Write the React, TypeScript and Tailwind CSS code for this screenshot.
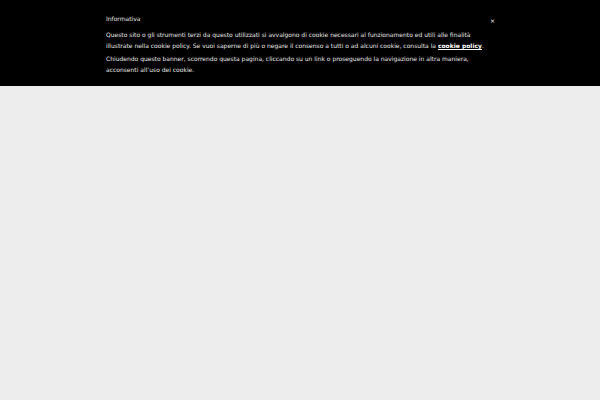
export default function App() {
  return (
    <div className="min-h-[400px] w-full bg-[#ededed]" style={{ fontFamily: '"DejaVu Sans", sans-serif' }}>
      <div className="relative h-[86px] w-full bg-black text-[#e6e6e6]">
        <div className="mx-auto w-[388px] pt-[13px] text-[6px] leading-[11px]">
          <div className="mb-[5px]">Informativa</div>
          <p className="mb-[2px]">
            Questo sito o gli strumenti terzi da questo utilizzati si avvalgono di cookie necessari al funzionamento ed utili alle finalità illustrate nella cookie policy. Se vuoi saperne di più o negare il consenso a tutti o ad alcuni cookie, consulta la{' '}
            <a className="font-bold text-white underline">cookie policy</a>.
          </p>
          <p>
            Chiudendo questo banner, scorrendo questa pagina, cliccando su un link o proseguendo la navigazione in altra maniera, acconsenti all’uso dei cookie.
          </p>
        </div>
        <div className="absolute left-[490px] top-[17px] text-[6px] leading-[8px] text-white">×</div>
      </div>
    </div>
  );
}
